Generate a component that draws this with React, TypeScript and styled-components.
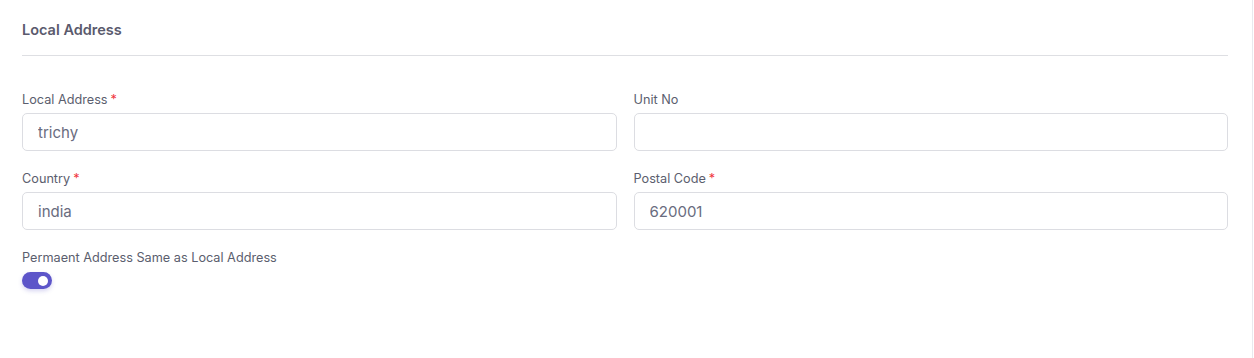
import React, { useState } from "react";
import styled, { createGlobalStyle } from "styled-components";

const GlobalStyle = createGlobalStyle`
  body {
    margin: 0;
    background: #ffffff;
    font-family: Inter, "Noto Sans", sans-serif;
  }
`;

const fields = [
  { id: "f1", label: "Local Address", value: "trichy", required: true },
  { id: "f2", label: "Unit No", value: "", required: false },
  { id: "f3", label: "Country", value: "india", required: true },
  { id: "f4", label: "Postal Code", value: "620001", required: true },
];

const App = () => {
  const [same, setSame] = useState(true);

  return (
    <>
      <GlobalStyle />
      <Card>
        <Header>
          <Title>Local Address</Title>
        </Header>
        <FormGrid>
          {fields.map((f) => (
            <Field key={f.id}>
              <Label>
                {f.label}
                {f.required && <Star>*</Star>}
              </Label>
              <Input defaultValue={f.value} />
            </Field>
          ))}
        </FormGrid>
        <ToggleRow>
          <Label>Permaent Address Same as Local Address</Label>
          <Switch $on={same} onClick={() => setSame(!same)} />
        </ToggleRow>
      </Card>
    </>
  );
};

const Card = styled.div`
  box-sizing: border-box;
  width: 1253px;
  height: 358px;
  border-right: 1px solid #e9e9ee;
  padding: 0 24px 0 22px;
`;

const Header = styled.div`
  box-sizing: border-box;
  height: 56px;
  padding-top: 4px;
  border-bottom: 1px solid #dedfe3;
  display: flex;
  align-items: center;
`;

const Title = styled.h2`
  margin: 0;
  font-size: 14.5px;
  font-weight: 600;
  color: #5a5a6d;
`;

const FormGrid = styled.div`
  display: grid;
  grid-template-columns: 1fr 1fr;
  column-gap: 17px;
  row-gap: 19px;
  margin-top: 35px;
`;

const Field = styled.div`
  display: flex;
  flex-direction: column;
`;

const Label = styled.label`
  font-size: 12.7px;
  line-height: 16px;
  padding-top: 1px;
  color: #5b5e6e;
  margin-bottom: 5px;
`;

const Star = styled.span`
  color: #f0353d;
  margin-left: 3px;
`;

const Input = styled.input`
  box-sizing: border-box;
  height: 38px;
  width: 100%;
  border: 1px solid #dcdde2;
  border-radius: 5px;
  padding: 0 15px;
  font-family: Inter, "Noto Sans", sans-serif;
  font-size: 15px;
  color: #696c7e;
  outline: none;
`;

const ToggleRow = styled.div`
  display: flex;
  flex-direction: column;
  align-items: flex-start;
  margin-top: 19px;
`;

const Switch = styled.button<{ $on: boolean }>`
  position: relative;
  width: 30px;
  height: 17px;
  padding: 0;
  border: none;
  border-radius: 9px;
  margin-top: 1px;
  background: ${(p) => (p.$on ? "#5d55c9" : "#d5d6dc")};
  box-shadow: 0 2px 4px rgba(93, 85, 201, 0.25);
  cursor: pointer;

  &::after {
    content: "";
    position: absolute;
    top: 3.5px;
    left: ${(p) => (p.$on ? "16px" : "4px")};
    width: 10px;
    height: 10px;
    border-radius: 50%;
    background: #ffffff;
  }
`;

export default App;
